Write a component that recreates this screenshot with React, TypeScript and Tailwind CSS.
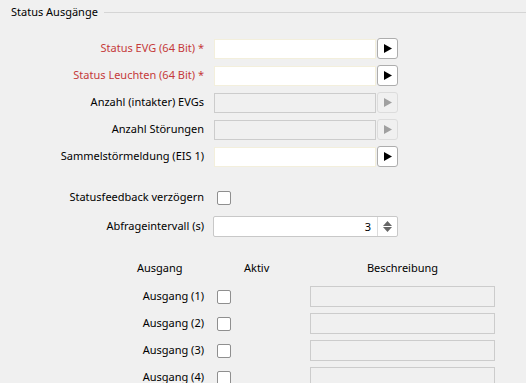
import type { ReactNode } from 'react';

const FONT = 'font-["Noto_Sans",sans-serif]';

function PlayButton({ disabled }: { disabled?: boolean }) {
  return (
    <div
      className={`ml-[1px] w-[21px] h-[21px] flex items-center justify-center rounded-[3px] border ${
        disabled ? 'border-[#dcdcdc] bg-[#f0f0f0]' : 'border-[#adadad] bg-white'
      }`}
    >
      <svg width="10" height="9" viewBox="0 0 10 9">
        <polygon points="1,0 9,4.5 1,9" fill={disabled ? '#a0a0a0' : '#000'} />
      </svg>
    </div>
  );
}

function FieldRow({ label, required, disabled }: { label: string; required?: boolean; disabled?: boolean }) {
  return (
    <div className="flex items-center h-[21px]">
      <div className={`w-[204px] text-right ${required ? 'text-[#c53a3a]' : ''}`}>{label}</div>
      <div
        className={`ml-[10px] w-[162px] h-[20px] border ${
          disabled ? 'border-[#cccccc] bg-[#f0f0f0]' : 'border-[#f3efdc] bg-white'
        }`}
      />
      <PlayButton disabled={disabled} />
    </div>
  );
}

function Checkbox() {
  return <div className="w-[14px] h-[14px] border border-[#8f8f8f] rounded-[2px] bg-white" />;
}

function Label({ children }: { children: ReactNode }) {
  return <div className="w-[204px] text-right">{children}</div>;
}

export default function App() {
  const outputs = [1, 2, 3, 4];
  return (
    <div className={`w-[526px] h-[383px] bg-[#f0f0f0] overflow-hidden text-[11px] text-black ${FONT}`}>
      <div className="flex items-center h-[24px] pl-[11px]">
        <span>Status Ausgänge</span>
        <div className="flex-1 h-px bg-[#d5d5d5] ml-[6px]" />
      </div>

      <div className="mt-[14px] flex flex-col gap-[6px]">
        <FieldRow label="Status EVG (64 Bit) *" required />
        <FieldRow label="Status Leuchten (64 Bit) *" required />
        <FieldRow label="Anzahl (intakter) EVGs" disabled />
        <FieldRow label="Anzahl Störungen" disabled />
        <FieldRow label="Sammelstörmeldung (EIS 1)" />
      </div>

      <div className="mt-[20px] flex items-center h-[21px]">
        <Label>Statusfeedback verzögern</Label>
        <div className="ml-[13px]">
          <Checkbox />
        </div>
      </div>

      <div className="mt-[8px] flex items-center h-[21px]">
        <Label>Abfrageintervall (s)</Label>
        <div className="ml-[9px] w-[185px] h-[21px] flex border border-[#c8c8c8] rounded-[2px] bg-white">
          <div className="flex-1 text-right pr-[6px] leading-[19px]">3</div>
          <div className="w-[20px] border-l border-[#dcdcdc] flex flex-col items-center justify-center gap-[1px]">
            <svg width="9" height="5" viewBox="0 0 9 5">
              <polygon points="0,5 4.5,0 9,5" fill="#666" />
            </svg>
            <svg width="9" height="5" viewBox="0 0 9 5">
              <polygon points="0,0 9,0 4.5,5" fill="#666" />
            </svg>
          </div>
        </div>
      </div>

      <div className="mt-[23px] flex items-center h-[16px]">
        <span className="ml-[137px] w-[107px]">Ausgang</span>
        <span className="w-[66px]">Aktiv</span>
        <span className="w-[185px] text-center">Beschreibung</span>
      </div>

      <div className="mt-[10px] flex flex-col gap-[6px]">
        {outputs.map((n) => (
          <div key={n} className="flex items-center h-[21px]">
            <Label>Ausgang ({n})</Label>
            <div className="ml-[13px]">
              <Checkbox />
            </div>
            <div className="ml-[79px] w-[185px] h-[21px] border border-[#cccccc] bg-[#f0f0f0]" />
          </div>
        ))}
      </div>
    </div>
  );
}
